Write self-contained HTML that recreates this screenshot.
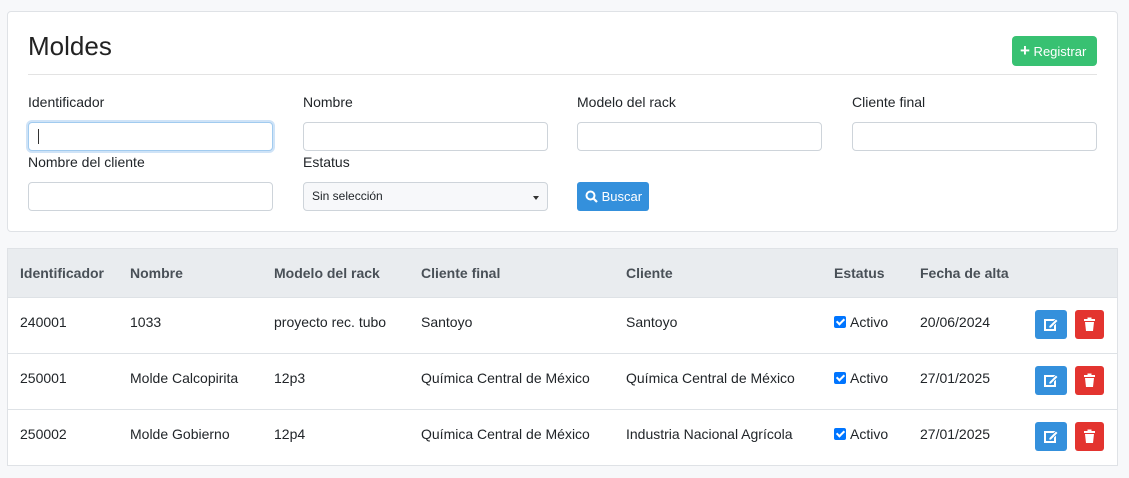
<!DOCTYPE html>
<html><head><style>
*{box-sizing:border-box}
body{margin:0;background:#f7f8fa;font-family:"Liberation Sans",sans-serif;color:#212529;font-size:14px;width:1129px;height:478px;position:relative;overflow:hidden}
.card{position:absolute;left:7px;width:1111px;background:#fff;border:1px solid #dfe2e6;border-radius:4px}
.a{position:absolute}
.inp{position:absolute;height:29px;width:245px;border:1px solid #ced4da;border-radius:4px;background:#fff}
.lbl{position:absolute;font-size:14px}
.th{position:absolute;top:16px;font-weight:bold;color:#495057;font-size:14px}
.row{position:absolute;left:0;width:1109px;height:56px;border-top:1px solid #dee2e6}
.row span{position:absolute;top:16px}
.cb{display:inline-block;width:12px;height:12px;background:#0075ff;border-radius:2px;vertical-align:-1px;margin-right:4px;position:relative}
.cb:after{content:"";position:absolute;left:4px;top:1px;width:3px;height:6px;border:solid #fff;border-width:0 2px 2px 0;transform:rotate(45deg)}
.be{position:absolute;left:1027px;top:12px;width:32px;height:29px;background:#3490dc;border-radius:3px}
.bd{position:absolute;left:1067px;top:12px;width:29px;height:29px;background:#e3342f;border-radius:3px}
</style></head><body>
<div class="card" style="top:11px;height:221px">
 <div class="a" style="left:20px;top:19px;font-size:26px;color:#222">Moldes</div>
 <div class="a" style="left:1004px;top:24px;width:85px;height:30px;background:#38c172;border-radius:4px;color:#fff;font-size:13px;line-height:30px;padding-left:8px"><b style="font-size:17px">+</b> Registrar</div>
 <div class="a" style="left:20px;top:62px;width:1069px;border-top:1px solid #e3e3e3"></div>
 <div class="lbl" style="left:20px;top:82px">Identificador</div>
 <div class="lbl" style="left:295px;top:82px">Nombre</div>
 <div class="lbl" style="left:569px;top:82px">Modelo del rack</div>
 <div class="lbl" style="left:844px;top:82px">Cliente final</div>
 <div class="inp" style="left:20px;top:110px;border-color:#a1cbef;box-shadow:0 0 0 2px #cfe3f7"><div class="a" style="left:9px;top:6px;height:15px;border-left:1px solid #333"></div></div>
 <div class="inp" style="left:295px;top:110px"></div>
 <div class="inp" style="left:569px;top:110px"></div>
 <div class="inp" style="left:844px;top:110px"></div>
 <div class="lbl" style="left:20px;top:142px">Nombre del cliente</div>
 <div class="lbl" style="left:295px;top:142px">Estatus</div>
 <div class="inp" style="left:20px;top:170px"></div>
 <div class="inp" style="left:295px;top:170px;background:#f7f8fa;font-size:12px;padding:6px 8px">Sin selección<div class="a" style="right:8px;top:13px;border:3px solid transparent;border-top:4px solid #333"></div></div>
 <div class="a" style="left:569px;top:170px;width:72px;height:29px;background:#3490dc;border-radius:3px;color:#fff;font-size:13px;line-height:29px;padding-left:8px">
  <svg width="13" height="13" viewBox="0 0 13 13" style="vertical-align:-2px"><circle cx="5.5" cy="5.5" r="4" fill="none" stroke="#fff" stroke-width="2"/><path d="M8.5 8.5L12 12" stroke="#fff" stroke-width="2.2"/></svg> Buscar</div>
</div>
<div class="card" style="top:248px;height:218px;border-radius:0">
 <div class="a" style="left:0;top:0;width:1109px;height:49px;background:#e9ecef"></div>
 <div class="th" style="left:12px">Identificador</div>
 <div class="th" style="left:122px">Nombre</div>
 <div class="th" style="left:266px">Modelo del rack</div>
 <div class="th" style="left:413px">Cliente final</div>
 <div class="th" style="left:618px">Cliente</div>
 <div class="th" style="left:826px">Estatus</div>
 <div class="th" style="left:912px">Fecha de alta</div>
 <div class="row" style="top:48px"><span style="left:12px">240001</span><span style="left:122px">1033</span><span style="left:266px">proyecto rec. tubo</span><span style="left:413px">Santoyo</span><span style="left:618px">Santoyo</span><span style="left:826px"><i class="cb"></i>Activo</span><span style="left:912px">20/06/2024</span><div class="be"></div><div class="bd"></div></div>
 <div class="row" style="top:104px"><span style="left:12px">250001</span><span style="left:122px">Molde Calcopirita</span><span style="left:266px">12p3</span><span style="left:413px">Química Central de México</span><span style="left:618px">Química Central de México</span><span style="left:826px"><i class="cb"></i>Activo</span><span style="left:912px">27/01/2025</span><div class="be"></div><div class="bd"></div></div>
 <div class="row" style="top:160px"><span style="left:12px">250002</span><span style="left:122px">Molde Gobierno</span><span style="left:266px">12p4</span><span style="left:413px">Química Central de México</span><span style="left:618px">Industria Nacional Agrícola</span><span style="left:826px"><i class="cb"></i>Activo</span><span style="left:912px">27/01/2025</span><div class="be"></div><div class="bd"></div></div>
</div>
<script>
document.querySelectorAll('.be').forEach(e=>e.innerHTML='<svg width="32" height="29"><rect x="10" y="10" width="10" height="10" fill="none" stroke="#fff" stroke-width="2"/><path d="M14 16l7-7 2 2-7 7h-2z" fill="#fff" stroke="#3490dc" stroke-width=".8"/></svg>');
document.querySelectorAll('.bd').forEach(e=>e.innerHTML='<svg width="29" height="29"><rect x="9" y="9" width="11" height="2" fill="#fff"/><rect x="12.5" y="7.5" width="4" height="2" fill="#fff"/><path d="M10 12h9l-1 9h-7z" fill="#fff"/></svg>');
</script>
</body></html>
